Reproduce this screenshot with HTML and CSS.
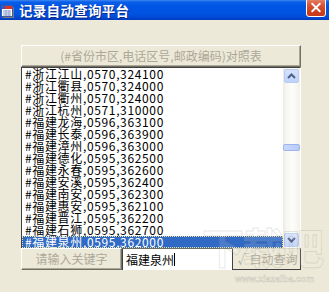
FILE: index.html
```html
<!DOCTYPE html>
<html lang="zh-CN">
<head>
<meta charset="utf-8">
<title>记录自动查询平台</title>
<link rel="stylesheet" href="styles.css">
</head>
<body>
<div class="window">
  <div class="titlebar">
    <svg class="ticon" width="14" height="14" viewBox="0 0 14 14">
      <rect x="1.5" y="1.5" width="11" height="11" fill="#fff" stroke="#3a5aa8"/>
      <rect x="2" y="2" width="10" height="3" fill="#d8322a"/>
      <rect x="2" y="2" width="3" height="3" fill="#2d58c8"/>
      <path d="M3 7h8M3 9h8M3 11h8M6 6v6M9 6v6" stroke="#8aa0d0" stroke-width="1"/>
      <rect x="13" y="3" width="1" height="10" fill="#7a7a7a"/>
      <rect x="3" y="13" width="11" height="1" fill="#7a7a7a"/>
    </svg>
    <span class="title">记录自动查询平台</span>
    <span class="spacer"></span>
    <span class="close">
      <svg width="19" height="19" viewBox="0 0 19 19">
        <path d="M5.5 5.5l8 8M13.5 5.5l-8 8" stroke="#fff" stroke-width="2" stroke-linecap="round"/>
      </svg>
    </span>
  </div>

  <div class="main">
    <div class="header">(#省份市区,电话区号,邮政编码)对照表</div>
    <div class="listbox">
      <div class="rows">
        <div class="row">#浙江江山,0570,324100</div>
        <div class="row">#浙江衢县,0570,324000</div>
        <div class="row">#浙江衢州,0570,324000</div>
        <div class="row">#浙江杭州,0571,310000</div>
        <div class="row">#福建龙海,0596,363100</div>
        <div class="row">#福建长泰,0596,363900</div>
        <div class="row">#福建漳州,0596,363000</div>
        <div class="row">#福建德化,0595,362500</div>
        <div class="row">#福建永春,0595,362600</div>
        <div class="row">#福建安溪,0595,362400</div>
        <div class="row">#福建南安,0595,362300</div>
        <div class="row">#福建惠安,0595,362100</div>
        <div class="row">#福建晋江,0595,362200</div>
        <div class="row">#福建石狮,0595,362700</div>
        <div class="row selected">#福建泉州,0595,362000</div>
      </div>
      <div class="scrollbar">
        <div class="sbtn">
          <svg width="9" height="6" viewBox="0 0 9 6"><path d="M1 5l3.5-3.5L8 5" fill="none" stroke="#4d6185" stroke-width="2"/></svg>
        </div>
        <div class="track"><div class="thumb"></div></div>
        <div class="sbtn">
          <svg width="9" height="6" viewBox="0 0 9 6"><path d="M1 1l3.5 3.5L8 1" fill="none" stroke="#4d6185" stroke-width="2"/></svg>
        </div>
      </div>
    </div>
    <div class="bottom">
      <div class="btn keyword">请输入关键字</div>
      <div class="input">福建泉州<span class="caret"></span></div>
      <div class="btn auto">√自动查询</div>
    </div>
  </div>

  <div class="wm-logo">下载吧</div>
  <div class="wm-url">www.xiazaiba.com</div>
</div>
</body>
</html>
```

FILE: styles.css
```css
html, body {
  margin: 0;
  padding: 0;
}
body {
  width: 329px;
  height: 292px;
  overflow: hidden;
  background: #ECE9D8;
  font-family: "Noto Sans CJK SC", "Noto Sans", sans-serif;
}
.window {
  position: relative;
  width: 329px;
  height: 292px;
}
.titlebar {
  height: 20px;
  display: flex;
  align-items: center;
  background: linear-gradient(to bottom, #3d86f4 0px, #0a5fe8 2px, #0055e5 6px, #0053e0 14px, #0047d2 18px, #0038b8 20px);
}
.ticon {
  flex: none;
  margin-left: 0;
  margin-top: 1px;
}
.title {
  margin-left: 5px;
  color: #fff;
  font-weight: bold;
  font-size: 13.5px;
  letter-spacing: 0.3px;
  line-height: 20px;
  text-shadow: 1px 1px 0 #0b2a8a;
}
.spacer {
  flex: 1;
}
.close {
  align-self: flex-start;
  margin-top: -2px;
  margin-right: 3px;
  width: 20px;
  height: 19px;
  box-sizing: border-box;
  border: 1px solid #fff;
  border-radius: 3px;
  background: linear-gradient(to bottom, #e8876a 0%, #d9553a 35%, #cb3e1c 75%, #c53a1c 100%);
  display: flex;
  align-items: center;
  justify-content: center;
}
.main {
  padding: 25px 0 0 21px;
  width: 280px;
}
.header {
  height: 22px;
  box-sizing: border-box;
  border-style: solid;
  border-width: 1px;
  border-color: #fff #716F64 #716F64 #fff;
  box-shadow: inset -1px -1px 0 #ACA899;
  color: #ACA899;
  font-size: 12px;
  line-height: 20px;
  text-align: center;
  white-space: nowrap;
}
.listbox {
  height: 181px;
  box-sizing: border-box;
  display: flex;
  border-top: 1px solid #404040;
  border-left: 1px solid #404040;
  border-right: 1px solid #fff;
  background: #fff;
}
.rows {
  flex: 1;
  overflow: hidden;
}
.row {
  height: 12px;
  line-height: 12px;
  font-size: 12px;
  padding-left: 3px;
  color: #000;
  white-space: nowrap;
  letter-spacing: 0.65px;
}
.row.selected {
  background: #316AC5;
  color: #fff;
  outline: 1px dotted #e9e29a;
  outline-offset: -1px;
}
.scrollbar {
  width: 17px;
  flex: none;
  display: flex;
  flex-direction: column;
  padding: 1px 0;
  box-sizing: border-box;
  background: linear-gradient(to right, #eceae0 0px, #f7f6f1 3px, #fdfdfa 10px, #f3f1e8 17px);
}
.sbtn {
  height: 14px;
  margin: 0 1px;
  box-sizing: border-box;
  border: 1px solid #b8cbf5;
  border-radius: 2px;
  background: linear-gradient(to bottom, #d6e2fd, #bfd2fa);
  display: flex;
  align-items: center;
  justify-content: center;
}
.track {
  flex: 1;
}
.thumb {
  margin: 61px 0 0 0;
  height: 7px;
  box-sizing: border-box;
  border: 1px solid #9db4ea;
  border-radius: 2px;
  background: linear-gradient(to right, #c9d8fc, #b7ccf8);
}
.bottom {
  display: flex;
  height: 22px;
}
.btn {
  box-sizing: border-box;
  height: 22px;
  font-size: 12px;
  line-height: 20px;
  color: #ACA899;
  text-align: center;
  white-space: nowrap;
}
.keyword {
  width: 101px;
  border-style: solid;
  border-width: 1px;
  border-color: #fff #716F64 #716F64 #fff;
  box-shadow: inset -1px -1px 0 #ACA899;
}
.input {
  width: 110px;
  box-sizing: border-box;
  height: 22px;
  background: #fff;
  border-left: 1px solid #404040;
  border-top: 1px solid #716F64;
  padding-left: 3px;
  font-size: 12px;
  line-height: 20px;
  color: #000;
  display: flex;
  align-items: center;
  white-space: nowrap;
}
.caret {
  display: inline-block;
  width: 1px;
  height: 13px;
  background: #000;
}
.auto {
  width: 69px;
  border-style: solid;
  border-width: 1px;
  border-color: #d6d3c6 #404040 #404040 #404040;
  padding-left: 2px;
}
.wm-logo {
  position: absolute;
  left: 202px;
  top: 222px;
  font-size: 42px;
  font-weight: bold;
  line-height: 48px;
  letter-spacing: -2px;
  color: rgba(255, 255, 255, 0.12);
  -webkit-text-stroke: 1px rgba(150, 145, 130, 0.22);
  pointer-events: none;
  white-space: nowrap;
}
.wm-url {
  position: absolute;
  left: 235px;
  top: 274px;
  font-family: "Liberation Sans", sans-serif;
  font-size: 9px;
  font-weight: bold;
  line-height: 11px;
  color: rgba(255, 255, 255, 0.4);
  -webkit-text-stroke: 0.5px rgba(150, 145, 130, 0.45);
  white-space: nowrap;
  pointer-events: none;
}
```
